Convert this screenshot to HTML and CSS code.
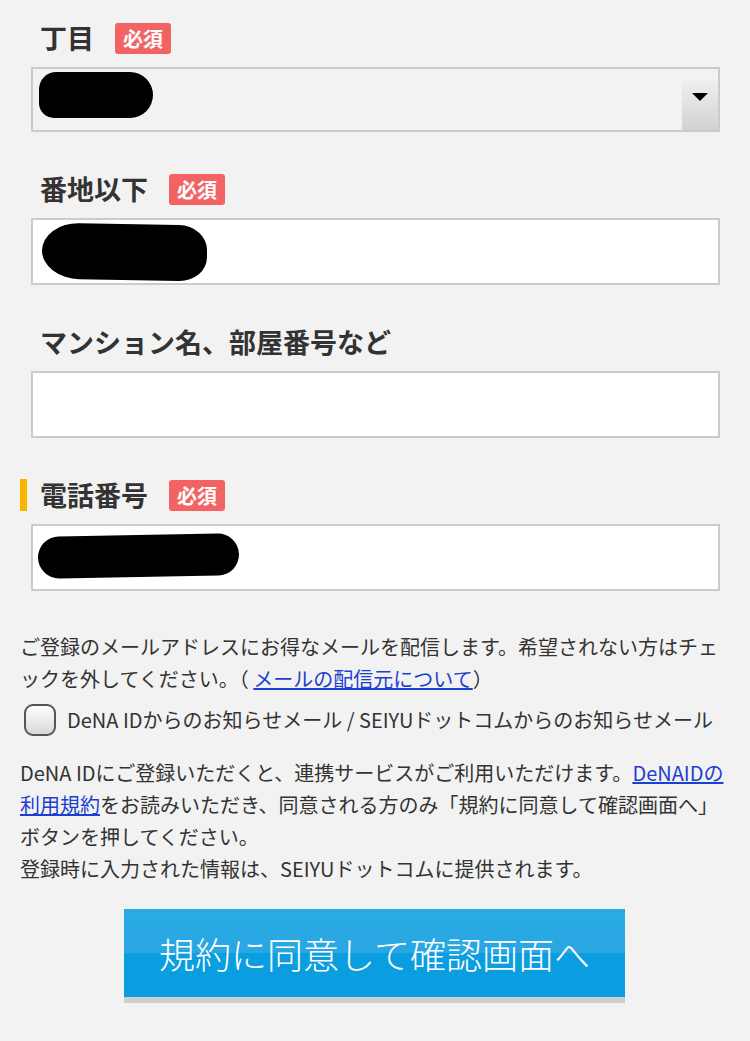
FILE: index.html
```html
<!DOCTYPE html>
<html lang="ja">
<head>
<meta charset="utf-8">
<link rel="stylesheet" href="styles.css">
</head>
<body>
<div class="page">
  <div class="form">
    <div class="field">
      <div class="label"><span class="label-text">丁目</span><span class="badge">必須</span></div>
      <div class="select">
        <div class="blob blob-a"></div>
        <div class="arrow"><span class="tri"></span></div>
      </div>
    </div>
    <div class="field">
      <div class="label"><span class="label-text">番地以下</span><span class="badge">必須</span></div>
      <div class="input"><div class="blob blob-b"></div></div>
    </div>
    <div class="field">
      <div class="label"><span class="label-text">マンション名、部屋番号など</span></div>
      <div class="input"></div>
    </div>
    <div class="field last">
      <div class="label marked"><span class="label-text">電話番号</span><span class="badge">必須</span></div>
      <div class="input"><div class="blob blob-c"></div></div>
    </div>
  </div>
  <div class="notice">
    <p class="text">ご登録のメールアドレスにお得なメールを配信します。希望されない方はチェックを外してください。（ <a href="#">メールの配信元について</a>）</p>
    <div class="check-row"><span class="checkbox"></span><span class="check-label">DeNA IDからのお知らせメール / SEIYUドットコムからのお知らせメール</span></div>
    <p class="text terms">DeNA IDにご登録いただくと、連携サービスがご利用いただけます。<a href="#">DeNAIDの利用規約</a>をお読みいただき、同意される方のみ「規約に同意して確認画面へ」ボタンを押してください。<br>登録時に入力された情報は、SEIYUドットコムに提供されます。</p>
  </div>
  <div class="btn-wrap"><button class="btn">規約に同意して確認画面へ</button></div>
</div>
</body>
</html>
```
FILE: styles.css
```css
* { box-sizing: border-box; }
html, body { margin: 0; padding: 0; }
body {
  background: #f2f2f2;
  font-family: "Noto Sans CJK JP", "Noto Sans", sans-serif;
  color: #333;
  width: 750px;
  height: 1041px;
  overflow: hidden;
}
.page { padding-top: 22px; }
.form { padding: 0 30px 0 31px; }
.field { margin-bottom: 41px; }
.field.last { margin-bottom: 0; }
.label {
  display: flex;
  align-items: center;
  height: 32px;
  padding-left: 9px;
  margin-bottom: 13px;
}
.label.marked {
  margin-left: -11px;
  padding-left: 13px;
  border-left: 7px solid #f7b500;
}
.label-text {
  font-size: 27px;
  font-weight: 700;
  line-height: 32px;
  color: #333;
}
.badge {
  margin-left: 21px;
  background: #f26464;
  color: #fff;
  font-size: 20px;
  font-weight: 700;
  line-height: 31px;
  height: 31px;
  padding: 0 8px;
  border-radius: 3px;
}
.select, .input {
  position: relative;
  height: 67px;
  border: 2px solid #cbcbcb;
}
.select { background: #f2f2f2; height: 65px; }
.input { background: #fff; }
.arrow {
  position: absolute;
  right: 0;
  bottom: 0;
  width: 36px;
  height: 51px;
  background: linear-gradient(#f0f0f0, #d2d2d2);
  display: flex;
  justify-content: center;
  padding-top: 14px;
}
.tri {
  width: 0;
  height: 0;
  border-left: 8px solid transparent;
  border-right: 8px solid transparent;
  border-top: 8px solid #000;
}
.blob { position: absolute; background: #000; }
.blob-a { left: 6px; top: 3px; width: 114px; height: 46px; border-radius: 30px 40px 40px 26px; }
.blob-b { left: 9px; top: 4px; width: 165px; height: 56px; border-radius: 40px 30px 30px 40px / 30px 26px 26px 30px; transform: skewY(1deg); }
.blob-c { left: 5px; top: 9px; width: 201px; height: 42px; border-radius: 24px; transform: rotate(-1deg); }
.notice { padding: 40px 20px 0 20px; }
.text {
  margin: 0;
  font-size: 20px;
  line-height: 32px;
  color: #333;
}
.text a { color: #1d3fcf; text-decoration: underline; }
.check-row {
  display: flex;
  align-items: center;
  margin-top: 9px;
  height: 32px;
}
.checkbox {
  width: 32px;
  height: 32px;
  margin-left: 4px;
  border: 2px solid #555;
  border-radius: 9px;
  background: linear-gradient(#ffffff, #d8d8d8);
}
.check-label {
  margin-left: 11px;
  font-size: 20px;
  line-height: 32px;
}
.terms { margin-top: 21px; }
.btn-wrap {
  display: flex;
  justify-content: center;
  padding-top: 24px;
}
.btn {
  margin-left: -1px;
  width: 501px;
  height: 88px;
  border: 0;
  padding: 0;
  color: #fff;
  font-family: "Noto Sans CJK JP", sans-serif;
  font-size: 36px;
  font-weight: 300;
  background: linear-gradient(#2aaae3 0%, #28a7e2 50%, #0a9de0 50%, #0a9de0 100%);
  box-shadow: 0 6px 0 #cfcfcf;
}
```
